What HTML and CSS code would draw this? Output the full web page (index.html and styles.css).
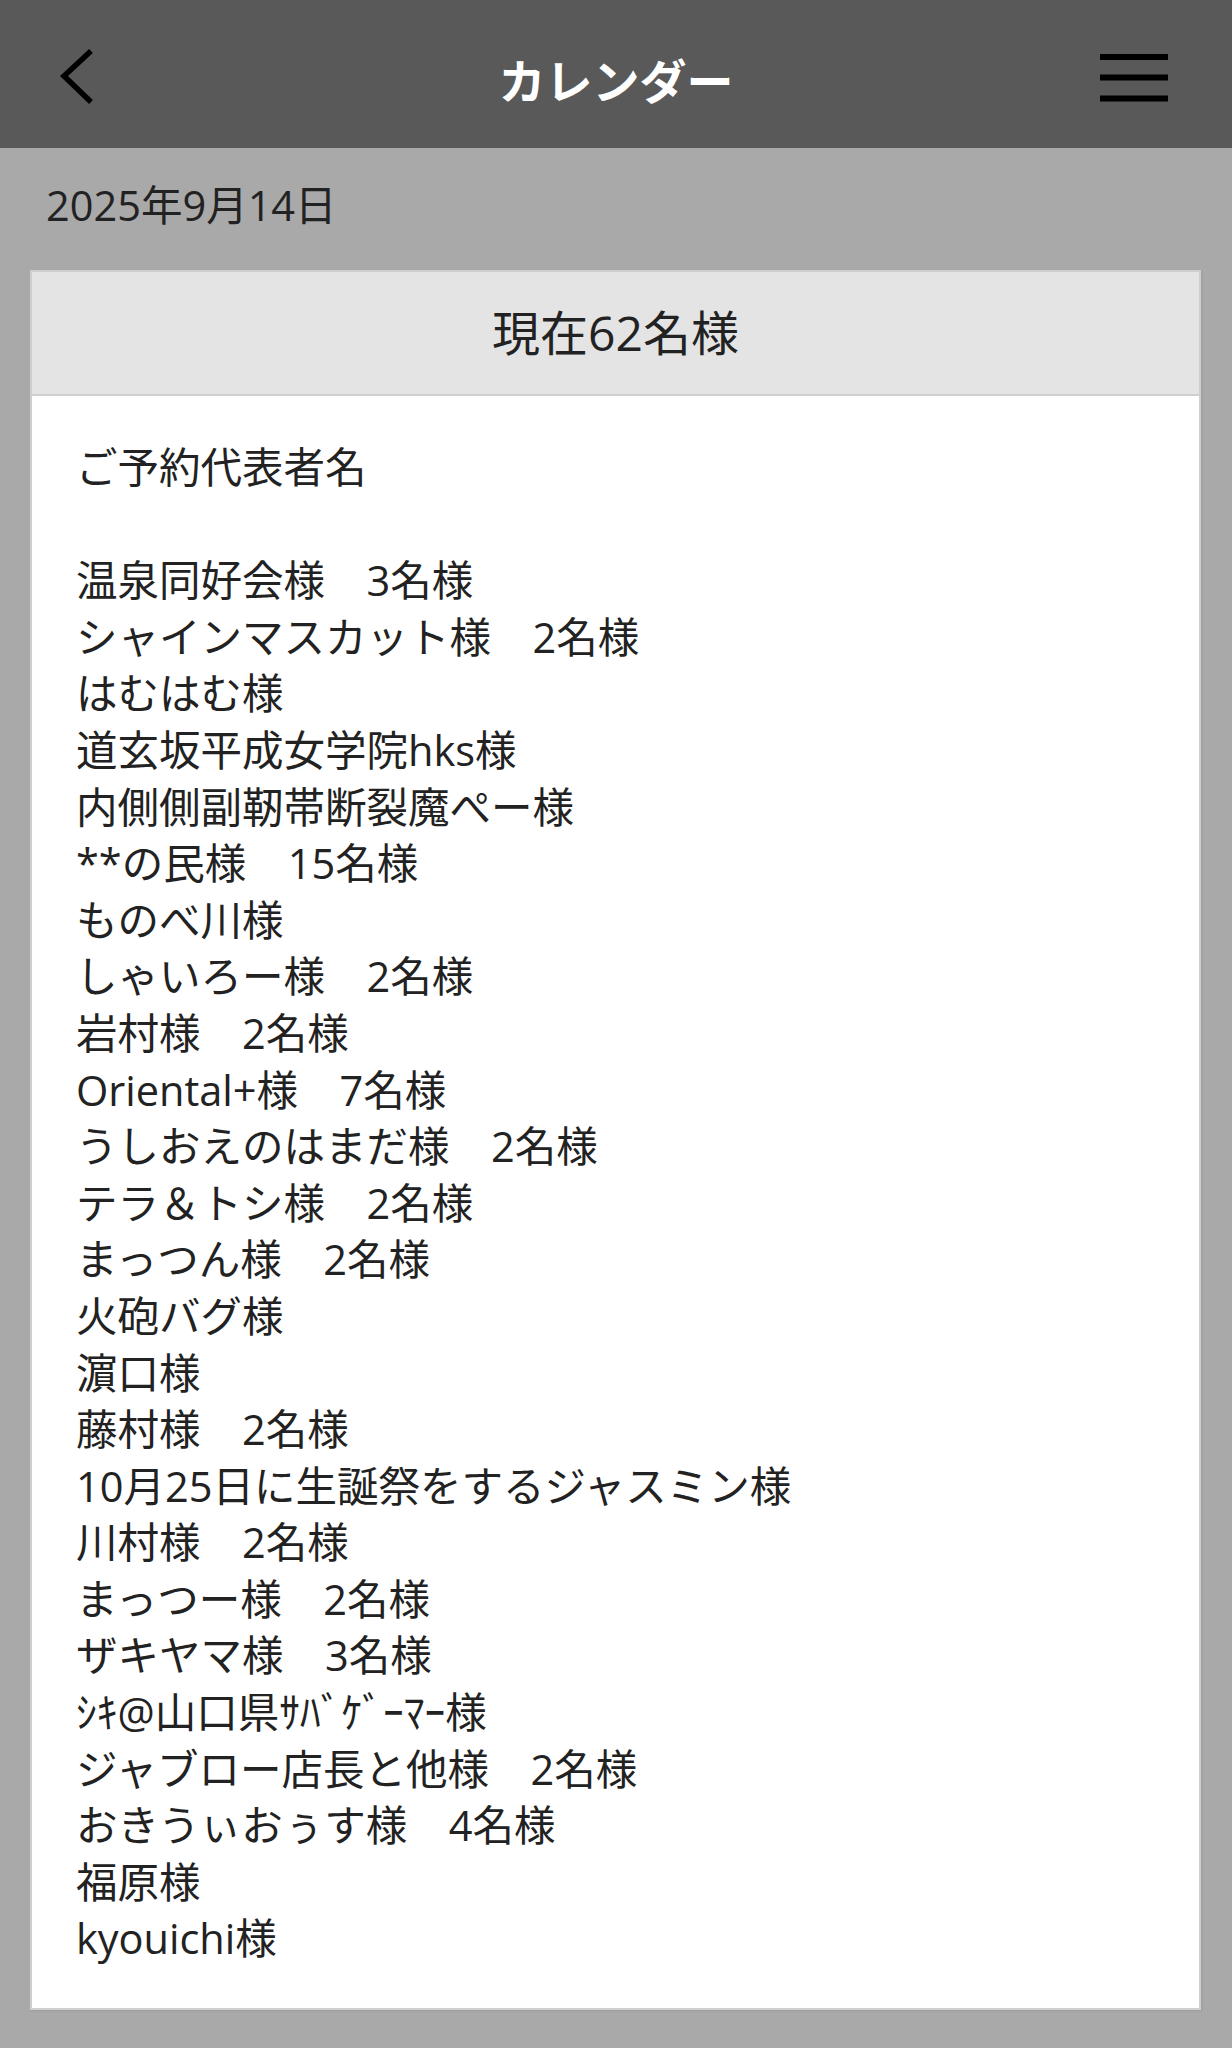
FILE: index.html
```html
<html>

<head>
    <meta charset="utf-8">
    <title>カレンダー</title>
    <link rel="stylesheet" href="styles.css">
</head>
<body>
<div class="topbar">
    <div class="topbar-left">
        <svg class="back-icon" width="40" height="56" viewBox="0 0 40 56">
            <polyline points="33,2 6,27 33,53" fill="none" stroke="#000" stroke-width="5.5" stroke-linecap="butt" stroke-linejoin="miter"/>
        </svg>
    </div>
    <div class="topbar-title">カレンダー</div>
    <div class="topbar-right">
        <svg class="menu-icon" width="68" height="50" viewBox="0 0 68 50">
            <rect x="0" y="0" width="68" height="6" fill="#000"/>
            <rect x="0" y="20.5" width="68" height="6" fill="#000"/>
            <rect x="0" y="41.5" width="68" height="6" fill="#000"/>
        </svg>
    </div>
</div>

<div class="date">2025年9月14日</div>

<div class="card">
    <div class="card-header">現在62名様</div>
    <div class="card-body">
        <div class="line">ご予約代表者名</div>
        <div class="line blank"></div>
        <div class="line">温泉同好会様　3名様</div>
        <div class="line">シャインマスカット様　2名様</div>
        <div class="line">はむはむ様</div>
        <div class="line">道玄坂平成女学院hks様</div>
        <div class="line">内側側副靭帯断裂魔ぺー様</div>
        <div class="line">**の民様　15名様</div>
        <div class="line">ものべ川様</div>
        <div class="line">しゃいろー様　2名様</div>
        <div class="line">岩村様　2名様</div>
        <div class="line">Oriental+様　7名様</div>
        <div class="line">うしおえのはまだ様　2名様</div>
        <div class="line">テラ＆トシ様　2名様</div>
        <div class="line">まっつん様　2名様</div>
        <div class="line">火砲バグ様</div>
        <div class="line">濵口様</div>
        <div class="line">藤村様　2名様</div>
        <div class="line">10月25日に生誕祭をするジャスミン様</div>
        <div class="line">川村様　2名様</div>
        <div class="line">まっつー様　2名様</div>
        <div class="line">ザキヤマ様　3名様</div>
        <div class="line">ｼｷ@山口県ｻﾊﾞｹﾞｰﾏｰ様</div>
        <div class="line">ジャブロー店長と他様　2名様</div>
        <div class="line">おきうぃおぅす様　4名様</div>
        <div class="line">福原様</div>
        <div class="line">kyouichi様</div>
    </div>
</div>
</body>
</html>
```

FILE: styles.css
```css
html, body {
    margin: 0;
    padding: 0;
    background-color: #a9a9a9;
    color: #222;
    font-family: "Open Sans", "Noto Sans CJK JP", sans-serif;
}

.topbar {
    height: 148px;
    background-color: #595959;
    display: grid;
    grid-template-columns: 1fr auto 1fr;
    align-items: center;
}

.topbar-left {
    padding-left: 58px;
    display: flex;
    align-items: center;
}

.topbar-right {
    padding-right: 64px;
    display: flex;
    justify-content: flex-end;
    align-items: center;
}

.back-icon, .menu-icon {
    display: block;
}

.back-icon {
    margin-top: 6px;
}

.menu-icon {
    margin-top: 9px;
}

.topbar-title {
    color: #fff;
    font-family: "Noto Sans CJK JP", sans-serif;
    font-size: 47px;
    font-weight: 700;
    margin-top: 8px;
}

.date {
    font-size: 41.5px;
    line-height: 56px;
    padding: 29px 46px 0;
    color: #222;
}

.card {
    margin: 37px 31px 0 30px;
    background-color: #fff;
    border: 2px solid #cfcfcf;
    box-shadow: 1px 1px 2px rgba(0, 0, 0, 0.08);
}

.card-header {
    background-color: #e4e4e4;
    border-bottom: 2px solid #cfcfcf;
    height: 122px;
    line-height: 122px;
    text-align: center;
    font-size: 48px;
    color: #222;
}

.card-body {
    padding: 43px 20px 41px 44px;
}

.line {
    font-size: 41.5px;
    line-height: 56.6px;
    height: 56.6px;
    white-space: pre;
}
```
